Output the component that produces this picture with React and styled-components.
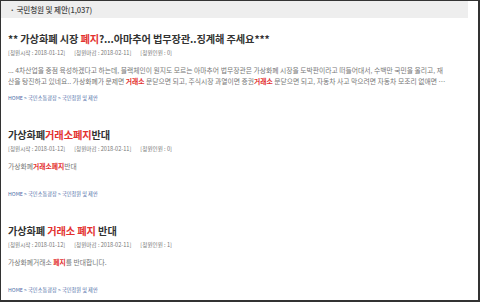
import React from 'react';
import styled, { createGlobalStyle } from 'styled-components';

const GlobalStyle = createGlobalStyle`
  html, body {
    margin: 0;
    padding: 0;
    background: #fff;
  }
  body {
    font-family: 'Noto Sans CJK KR', 'Noto Sans', sans-serif;
  }
`;

const Frame = styled.div`
  box-sizing: border-box;
  width: 480px;
  height: 302px;
  border-top: 1px solid #333;
  border-left: 1px solid #333;
  border-right: 2px solid #333;
  border-bottom: 2px solid #333;
  background: #fff;
  overflow: hidden;
`;

const Header = styled.div`
  height: 17px;
  margin-right: 10px;
  background: #eeeeee;
  display: flex;
  align-items: center;
  padding-left: 9px;
  font-size: 7.6px;
  color: #444;
  font-weight: 500;
  letter-spacing: -0.1px;
`;

const Dot = styled.span`
  margin-right: 2px;
  font-weight: 700;
`;

const List = styled.div`
  padding: 13px 8px 0 7px;
`;

const Entry = styled.article`
  margin-bottom: 25px;
`;

const Title = styled.h2`
  margin: 0;
  font-size: 10.2px;
  line-height: 16px;
  font-weight: 700;
  color: #333;
  white-space: nowrap;
  letter-spacing: -0.1px;
`;

const Red = styled.span`
  color: #e3312f;
  font-weight: ${p => (p.$bold ? 700 : 'inherit')};
`;

const Meta = styled.div`
  margin-top: 2px;
  display: flex;
  gap: 9px;
  font-size: 5.6px;
  line-height: 9px;
  color: #777;
`;

const Body = styled.p`
  margin: 7px 0 0;
  min-height: 22px;
  font-size: 6.8px;
  line-height: 11px;
  color: #777;
  white-space: nowrap;
  overflow: hidden;
`;

const Crumb = styled.div`
  margin-top: 7px;
  font-size: 5.2px;
  line-height: 8px;
  color: #4a6aa5;
`;

const petitions = [
  {
    title: (
      <>
        ** 가상화폐 시장 <Red>폐지</Red>?...아마추어 법무장관..징계해 주세요***
      </>
    ),
    start: '2018-01-12',
    end: '2018-02-11',
    count: 0,
    body: (
      <>
        ... 4차산업을 중점 육성하겠다고 하는데, 블랙체인이 뭔지도 모르는 아마추어 법무장관은 가상화폐 시장을 도박판이라고 떠들어대서, 수백만 국민을 울리고, 재
        <br />
        산을 탕진하고 있네요.. 가상화폐가 문제면 <Red $bold>거래소</Red> 문닫으면 되고, 주식시장 과열이면 증권<Red $bold>거래소</Red> 문닫으면 되고, 자동차 사고 막으려면 자동차 모조리 없애면 …
      </>
    ),
  },
  {
    title: (
      <>
        가상화폐<Red>거래소폐지</Red>반대
      </>
    ),
    start: '2018-01-12',
    end: '2018-02-11',
    count: 0,
    body: (
      <>
        가상화폐<Red $bold>거래소폐지</Red>반대
      </>
    ),
  },
  {
    title: (
      <>
        가상화폐 <Red>거래소 폐지</Red> 반대
      </>
    ),
    start: '2018-01-12',
    end: '2018-02-11',
    count: 1,
    body: (
      <>
        가상화폐거래소 <Red $bold>폐지</Red>를 반대합니다.
      </>
    ),
  },
];

export default function App() {
  return (
    <>
      <GlobalStyle />
      <Frame>
        <Header>
          <Dot>·</Dot>국민청원 및 제안(1,037)
        </Header>
        <List>
          {petitions.map((p, i) => (
            <Entry key={i}>
              <Title>{p.title}</Title>
              <Meta>
                <span>[청원시작 : {p.start}]</span>
                <span>[청원마감 : {p.end}]</span>
                <span>[청원인원 : {p.count}]</span>
              </Meta>
              <Body>{p.body}</Body>
              <Crumb>HOME &gt; 국민소통광장 &gt; 국민청원 및 제안</Crumb>
            </Entry>
          ))}
        </List>
      </Frame>
    </>
  );
}
